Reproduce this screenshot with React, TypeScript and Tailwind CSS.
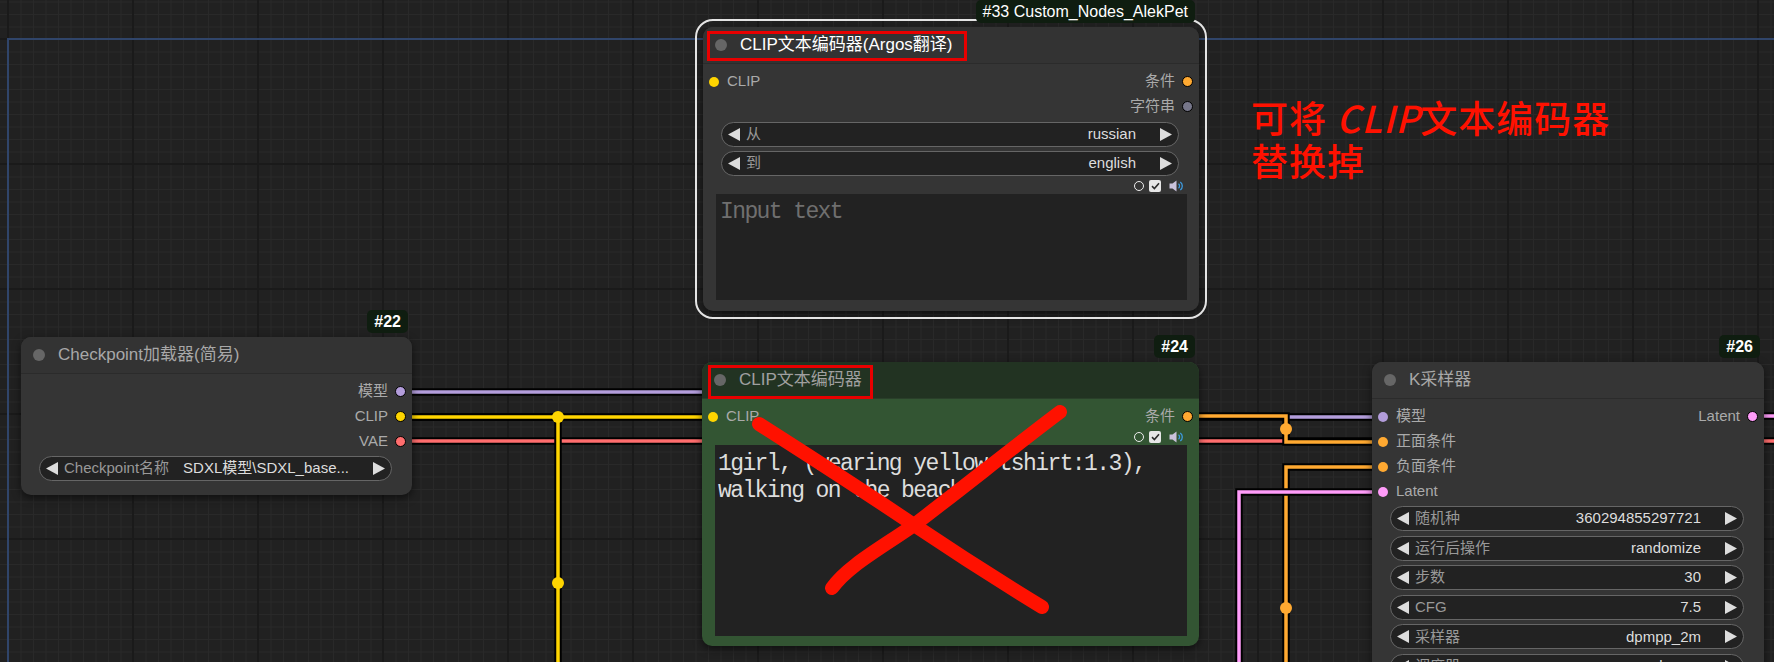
import React from 'react'

const FONT = "font-['Liberation_Sans','Noto_Sans_CJK_SC',sans-serif]"

type Slot = { label: string; color: string }

const InDot = ({ color }: { color: string }) => (
  <span className={`h-[10px] w-[10px] shrink-0 rounded-full ${color}`} />
)

const OutDot = ({ color }: { color: string }) => (
  <span className={`h-[11px] w-[11px] shrink-0 rounded-full border-[1.5px] border-black ${color}`} />
)

const SlotRow = ({ input, output }: { input?: Slot; output?: Slot }) => (
  <div className="flex h-[25px] items-center text-[15px]">
    {input && (
      <div className="flex items-center pl-[6px]">
        <InDot color={input.color} />
        <span className="ml-[8px] whitespace-nowrap text-[#aaa]">{input.label}</span>
      </div>
    )}
    {output && (
      <div className="ml-auto flex items-center pr-[6px]">
        <span className="mr-[7px] whitespace-nowrap text-[#aaa]">{output.label}</span>
        <OutDot color={output.color} />
      </div>
    )}
  </div>
)

const TitleBar = ({ title, textClass, barClass }: { title: string; textClass: string; barClass: string }) => (
  <div className={`flex h-[37px] shrink-0 items-center rounded-t-[10px] border-b ${barClass}`}>
    <span className="ml-[12px] h-[12px] w-[12px] shrink-0 rounded-full bg-[#666]" />
    <span className={`ml-[13px] whitespace-nowrap text-[17px] ${textClass}`}>{title}</span>
  </div>
)

const Tri = ({ dir }: { dir: 'left' | 'right' }) => (
  <svg width="12" height="13" viewBox="0 0 12 13" className="shrink-0">
    <polygon points={dir === 'left' ? '12,0 12,13 0,6.5' : '0,0 0,13 12,6.5'} fill="#dddddd" />
  </svg>
)

const Widget = ({ label, value }: { label: string; value: string }) => (
  <div className="ml-[18px] mr-[20px] flex h-[25px] shrink-0 items-center rounded-full border border-[#666] bg-[#222] px-[6px] text-[15px]">
    <Tri dir="left" />
    <span className="ml-[6px] whitespace-nowrap text-[#999]">{label}</span>
    <span className="ml-auto mr-[24px] truncate whitespace-nowrap pl-[12px] text-[#ddd]">{value}</span>
    <Tri dir="right" />
  </div>
)

// small toggles above the prompt box
const ToggleIcons = () => (
  <div className="flex h-[16px] shrink-0 items-center justify-end pr-[15px]">
    <span className="h-[10px] w-[10px] rounded-full border-[1.5px] border-[#eee]" />
    <span className="ml-[5px] flex h-[12px] w-[12px] items-center justify-center rounded-[2px] bg-[#e6e6e6]">
      <svg width="9" height="8" viewBox="0 0 9 8">
        <path d="M1 4.2 L3.4 6.5 L8 1.3" stroke="#2a2a2a" strokeWidth="1.6" fill="none" />
      </svg>
    </span>
    <svg className="ml-[8px]" width="15" height="12" viewBox="0 0 15 12">
      <path d="M0.5 3.5 H3.5 L7.5 0.5 V11.5 L3.5 8.5 H0.5 Z" fill="#c9c1da" />
      <path d="M9.5 3.8 A2.8 2.8 0 0 1 9.5 8.2" stroke="#3d9be0" strokeWidth="1.3" fill="none" />
      <path d="M11.3 2 A5 5 0 0 1 11.3 10" stroke="#3d9be0" strokeWidth="1.3" fill="none" />
    </svg>
  </div>
)

const Badge = ({ text, bold }: { text: string; bold?: boolean }) => (
  <div
    className={`absolute bottom-[calc(100%+4px)] right-[4px] z-10 flex h-[23px] items-center whitespace-nowrap rounded-[5px] bg-[#0f1d10] px-[7px] text-[16px] text-white ${bold ? 'font-bold' : ''}`}
  >
    {text}
  </div>
)

const links = [
  { d: 'M400 392 H890 V417 H1384', color: '#B39DDB' },
  { d: 'M400 441 H1790', color: '#FF6E6E' },
  { d: 'M400 417 H714', color: '#FFD500' },
  { d: 'M400 417 H558 V690', color: '#FFD500' },
  { d: 'M1187 416 H1286 V442 H1384', color: '#FFA931' },
  { d: 'M1286 690 V467 H1384', color: '#FFA931' },
  { d: 'M1239 690 V492 H1384', color: '#FF9CF9' },
  { d: 'M1751 416 H1790', color: '#FF9CF9' },
]

const centers = [
  { x: 558, y: 417, color: '#FFD500' },
  { x: 558, y: 583, color: '#FFD500' },
  { x: 1286, y: 429, color: '#FFA931' },
  { x: 1286, y: 608, color: '#FFA931' },
]

const sampler = [
  { label: '随机种', value: '360294855297721' },
  { label: '运行后操作', value: 'randomize' },
  { label: '步数', value: '30' },
  { label: 'CFG', value: '7.5' },
  { label: '采样器', value: 'dpmpp_2m' },
  { label: '调度器', value: 'karras' },
]

export default function App() {
  return (
    <div
      className={`relative h-[662px] w-[1774px] overflow-hidden bg-[#212121] bg-[image:linear-gradient(to_right,#1a1a1a_2px,transparent_2px),linear-gradient(to_bottom,#1a1a1a_2px,transparent_2px),linear-gradient(to_right,#292929_1px,transparent_1px),linear-gradient(to_bottom,#292929_1px,transparent_1px)] bg-[size:125px_125px,125px_125px,12.5px_12.5px,12.5px_12.5px] bg-[position:7px_38px,7px_38px,8px_1.5px,8px_1.5px] ${FONT}`}
    >
      {/* group frame */}
      <div className="absolute bottom-[-10px] left-[7px] right-[-10px] top-[38px] border-l-2 border-t-2 border-[#30456a]" />

      {/* links */}
      <svg className="absolute left-0 top-0" width="1774" height="662">
        {links.map((l, i) => (
          <g key={i}>
            <path d={l.d} stroke="#000" strokeWidth="7.5" fill="none" />
            <path d={l.d} stroke={l.color} strokeWidth="3.5" fill="none" />
          </g>
        ))}
        {centers.map((c, i) => (
          <circle key={i} cx={c.x} cy={c.y} r="6" fill={c.color} />
        ))}
      </svg>

      {/* #22 Checkpoint */}
      <div className="absolute left-[21px] top-[337px] flex h-[158px] w-[391px] flex-col rounded-[10px] bg-[#353535] shadow-[0_3px_8px_rgba(0,0,0,0.55)]">
        <Badge text="#22" bold />
        <TitleBar title="Checkpoint加载器(简易)" textClass="text-[#a8a8a8]" barClass="border-[#2b2b2b] bg-[#333]" />
        <div className="mt-[5px] flex flex-col">
          <SlotRow output={{ label: '模型', color: 'bg-[#B39DDB]' }} />
          <SlotRow output={{ label: 'CLIP', color: 'bg-[#FFD500]' }} />
          <SlotRow output={{ label: 'VAE', color: 'bg-[#FF6E6E]' }} />
        </div>
        <div className="mt-[2px]">
          <Widget label="Checkpoint名称" value="SDXL模型\SDXL_base..." />
        </div>
      </div>

      {/* #33 Argos translate node (selected) */}
      <div className="absolute left-[703px] top-[27px] flex h-[284px] w-[496px] flex-col rounded-[10px] bg-[#353535] shadow-[0_3px_8px_rgba(0,0,0,0.55)]">
        <div className="pointer-events-none absolute -inset-[8px] rounded-[18px] border-2 border-[#e4e4e4]" />
        <Badge text="#33 Custom_Nodes_AlekPet" />
        <TitleBar title="CLIP文本编码器(Argos翻译)" textClass="text-white" barClass="border-[#2b2b2b] bg-[#333]" />
        <div className="absolute left-[4px] top-[4px] h-[30px] w-[260px] border-[3px] border-[#e80000]" />
        <div className="mt-[5px] flex flex-col">
          <SlotRow input={{ label: 'CLIP', color: 'bg-[#FFD500]' }} output={{ label: '条件', color: 'bg-[#FFA931]' }} />
          <SlotRow output={{ label: '字符串', color: 'bg-[#77778a]' }} />
        </div>
        <div className="mt-[3px]">
          <Widget label="从" value="russian" />
        </div>
        <div className="mt-[4px]">
          <Widget label="到" value="english" />
        </div>
        <div className="mt-[2px]">
          <ToggleIcons />
        </div>
        <div className="ml-[13px] mr-[12px] h-[106px] bg-[#222] px-[4px] pt-[5px] font-['Liberation_Mono',monospace] text-[23px] leading-[27px] tracking-[-1.6px] text-[#6f6f6f]">
          Input text
        </div>
      </div>

      {/* #24 CLIP text encode (green) */}
      <div className="absolute left-[702px] top-[362px] flex h-[284px] w-[497px] flex-col rounded-[10px] bg-[#335533] shadow-[0_3px_8px_rgba(0,0,0,0.55)]">
        <Badge text="#24" bold />
        <TitleBar title="CLIP文本编码器" textClass="text-[#a0a0a0]" barClass="border-[#2a3f2a] bg-[#223322]" />
        <div className="absolute left-[6px] top-[3px] h-[34px] w-[165px] border-[3px] border-[#e80000]" />
        <div className="mt-[5px]">
          <SlotRow input={{ label: 'CLIP', color: 'bg-[#FFD500]' }} output={{ label: '条件', color: 'bg-[#FFA931]' }} />
        </div>
        <ToggleIcons />
        <div className="ml-[13px] mr-[12px] h-[191px] bg-[#222] px-[3px] pt-[6px] font-['Liberation_Mono','Noto_Sans_CJK_SC',monospace] text-[23px] leading-[27px] tracking-[-1.6px] text-[#dddddd]">
          1girl, (wearing yellow tshirt:1.3),
          <br />
          walking on the beach
        </div>
      </div>

      {/* #26 KSampler */}
      <div className="absolute left-[1372px] top-[362px] flex h-[340px] w-[392px] flex-col rounded-[10px] bg-[#353535] shadow-[0_3px_8px_rgba(0,0,0,0.55)]">
        <Badge text="#26" bold />
        <TitleBar title="K采样器" textClass="text-[#a8a8a8]" barClass="border-[#2b2b2b] bg-[#353535]" />
        <div className="mt-[5px] flex flex-col">
          <SlotRow input={{ label: '模型', color: 'bg-[#B39DDB]' }} output={{ label: 'Latent', color: 'bg-[#FF9CF9]' }} />
          <SlotRow input={{ label: '正面条件', color: 'bg-[#FFA931]' }} />
          <SlotRow input={{ label: '负面条件', color: 'bg-[#FFA931]' }} />
          <SlotRow input={{ label: 'Latent', color: 'bg-[#FF9CF9]' }} />
        </div>
        <div className="mt-[2px] flex flex-col gap-[4.6px]">
          {sampler.map((w) => (
            <Widget key={w.label} label={w.label} value={w.value} />
          ))}
        </div>
      </div>

      {/* hand-drawn cross over #24 */}
      <svg className="pointer-events-none absolute left-0 top-0" width="1774" height="662">
        <path
          d="M759 424 Q850 482 914 525 T1042 607"
          stroke="#ff1100"
          strokeWidth="14"
          strokeLinecap="round"
          fill="none"
        />
        <path
          d="M1060 412 C1020 442 960 490 914 525 C878 550 848 566 832 588"
          stroke="#ff1100"
          strokeWidth="14"
          strokeLinecap="round"
          fill="none"
        />
      </svg>

      {/* note */}
      <div className="absolute left-[1251px] top-[96px] font-['Noto_Sans_CJK_SC',sans-serif] text-[37px] font-medium leading-[43px] tracking-[1px] text-[#ff1100]">
        <div className="whitespace-nowrap">
          可将 <span className="italic">CLIP</span>文本编码器
        </div>
        <div className="whitespace-nowrap">替换掉</div>
      </div>
    </div>
  )
}
